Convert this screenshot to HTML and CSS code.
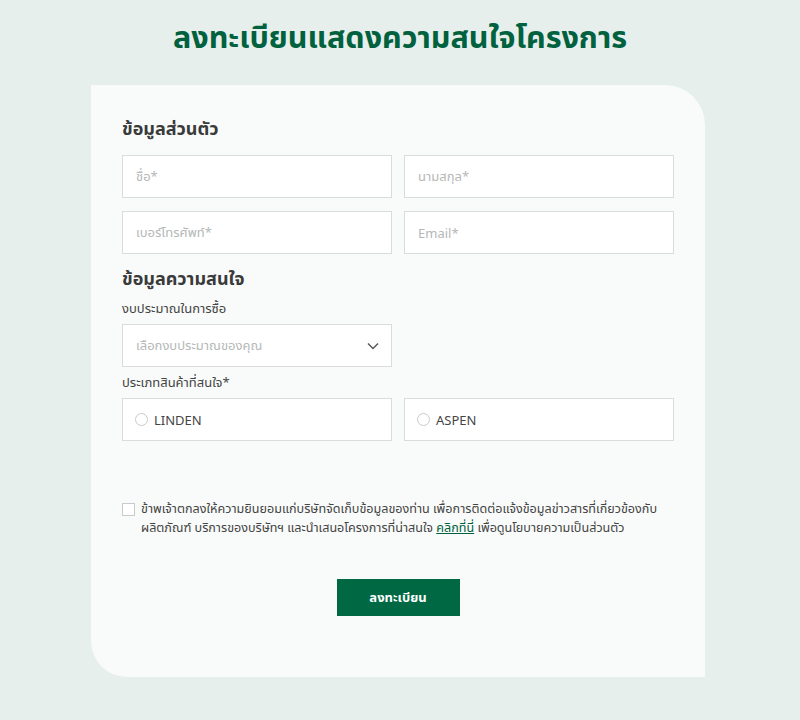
FILE: index.html
```html
<!DOCTYPE html>
<html lang="th">
<head>
<meta charset="utf-8">
<link rel="stylesheet" href="styles.css">
</head>
<body>
<div class="page">
  <h1 class="title">ลงทะเบียนแสดงความสนใจโครงการ</h1>
  <div class="card">
    <h2 class="section">ข้อมูลส่วนตัว</h2>
    <div class="grid">
      <div class="field"><span class="ph">ชื่อ*</span></div>
      <div class="field"><span class="ph">นามสกุล*</span></div>
      <div class="field"><span class="ph">เบอร์โทรศัพท์*</span></div>
      <div class="field"><span class="ph">Email*</span></div>
    </div>
    <h2 class="section section2">ข้อมูลความสนใจ</h2>
    <div class="label">งบประมาณในการซื้อ</div>
    <div class="grid">
      <div class="field select"><span class="ph">เลือกงบประมาณของคุณ</span>
        <svg class="chev" width="12" height="8" viewBox="0 0 12 8"><path d="M1 1.5 L6 6.5 L11 1.5" fill="none" stroke="#555" stroke-width="1.4"/></svg>
      </div>
    </div>
    <div class="label">ประเภทสินค้าที่สนใจ*</div>
    <div class="grid">
      <div class="field radio"><span class="dot"></span><span class="opt">LINDEN</span></div>
      <div class="field radio"><span class="dot"></span><span class="opt">ASPEN</span></div>
    </div>
    <div class="consent">
      <span class="box"></span>
      <p>ข้าพเจ้าตกลงให้ความยินยอมแก่บริษัทจัดเก็บข้อมูลของท่าน เพื่อการติดต่อแจ้งข้อมูลข่าวสารที่เกี่ยวข้องกับผลิตภัณฑ์ บริการของบริษัทฯ และนำเสนอโครงการที่น่าสนใจ <a href="#">คลิกที่นี่</a> เพื่อดูนโยบายความเป็นส่วนตัว</p>
    </div>
    <div class="actions"><button class="btn">ลงทะเบียน</button></div>
  </div>
</div>
</body>
</html>
```
FILE: styles.css
```css
html, body { margin: 0; padding: 0; }
body {
  background: #e7efec;
  font-family: "Noto Sans", "Noto Sans Thai", sans-serif;
  color: #444;
}
.page { width: 800px; height: 720px; overflow: hidden; }
.title {
  margin: 0;
  padding-top: 14px;
  height: 85px;
  box-sizing: border-box;
  text-align: center;
  color: #00613e;
  font-size: 30.5px;
  font-weight: 700;
  line-height: 44px;
}
.card {
  margin-left: 91px;
  width: 614px;
  height: 592px;
  box-sizing: border-box;
  background: #f9fbfa;
  border-radius: 0 40px 0 36px;
  padding: 28px 32px 0 31px;
}
.section {
  margin: 0 0 12px;
  font-size: 18px;
  line-height: 30px;
  font-weight: 700;
  color: #3a3a3a;
}
.section2 { margin-top: 9px; margin-bottom: 0; }
.grid {
  display: grid;
  grid-template-columns: 270px 270px;
  column-gap: 12px;
  row-gap: 13px;
}
.field {
  height: 43px;
  box-sizing: border-box;
  background: #fff;
  border: 1px solid #d9dcdb;
  display: flex;
  align-items: center;
  padding: 0 13px;
  font-size: 13px;
}
.ph { color: #b5b8b7; }
.select { justify-content: space-between; padding-right: 12px; }
.label { font-size: 13px; color: #444; line-height: 20px; margin: 5px 0 6px; }
.radio { gap: 6px; padding-left: 12px; }
.dot {
  width: 11px; height: 11px; border-radius: 50%;
  border: 1px solid #c8cbca; background: #fff;
}
.opt { font-size: 13px; color: #444; }
.consent {
  display: flex;
  align-items: flex-start;
  gap: 6px;
  margin-top: 58px;
}
.box {
  flex: none;
  width: 11px; height: 11px;
  border: 1px solid #c8cbca; background: #fff;
  margin-top: 4px;
}
.consent p { margin: 0; font-size: 12.6px; line-height: 19px; color: #444; }
.consent a { color: #00613e; text-decoration: underline; }
.actions { display: flex; justify-content: center; margin-top: 42px; }
.btn {
  width: 123px; height: 37px;
  border: none;
  background: #006944;
  color: #fff;
  font-family: inherit;
  font-size: 13px;
  font-weight: 700;
  margin-left: 1px;
}
```
